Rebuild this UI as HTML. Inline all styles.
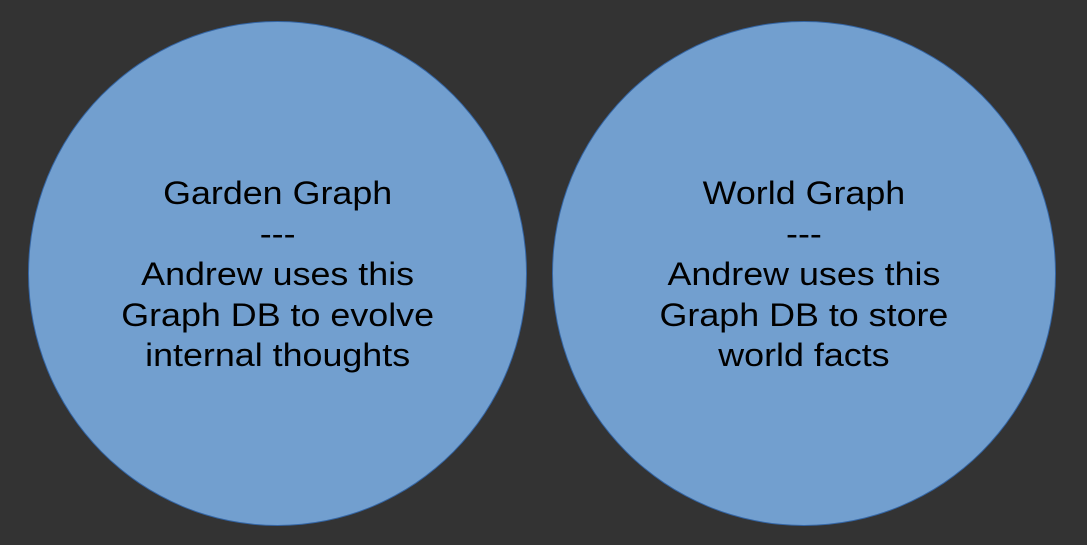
<!DOCTYPE html>
<html><head><style>
html,body{margin:0;padding:0;background:#333333;width:1087px;height:545px;overflow:hidden}
.c{position:absolute;border-radius:50%;background:#729fcf;border:1.5px solid #3465a4;box-sizing:border-box;display:flex;align-items:center;justify-content:center;text-align:center;font-family:"Liberation Sans",sans-serif;font-size:32px;line-height:40.5px;color:#000}
.t{margin-top:2px;transform:scaleX(1.12);white-space:nowrap}
</style></head><body>
<div class="c" style="left:28px;top:21px;width:499px;height:505px"><div class="t">Garden Graph<br>---<br>Andrew uses this<br>Graph DB to evolve<br>internal thoughts</div></div>
<div class="c" style="left:552px;top:21px;width:504px;height:505px"><div class="t">World Graph<br>---<br>Andrew uses this<br>Graph DB to store<br>world facts</div></div>
</body></html>
